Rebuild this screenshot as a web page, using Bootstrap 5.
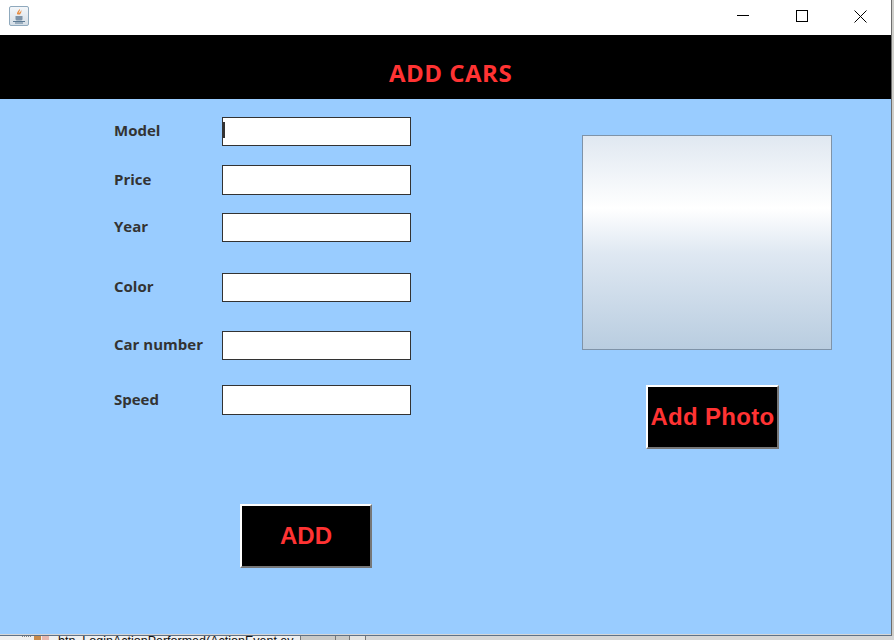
<!DOCTYPE html>
<html lang="en">
<head>
<meta charset="utf-8">
<title>Add Cars</title>
<link href="https://cdn.jsdelivr.net/npm/bootstrap@5.3.0/dist/css/bootstrap.min.css" rel="stylesheet">
<style>
html,body{height:640px;overflow:hidden;background:#d6d6d6}
.deskrow{height:636px}
.appwin{width:892px;height:636px;flex:none;border-right:1px solid #6e6e6e;border-bottom:1px solid #5f7186}
.sidestrip{width:2px;background:#cfcfcb}
.ttlbar{height:35px;background:#fff}
.javaico{width:20px;height:20px;margin:6px 0 0 9px;border:1px solid #8fa9bd;border-radius:2px;background:linear-gradient(#f4f7fa,#d5dee6)}
.ctlgroup{margin-right:1px}
.wctl{width:59px;height:35px;padding-top:10px}
.hdrbar{height:64px;background:#000;padding:22px 0 0 10px}
.hdrtitle{font:700 24px/32px "Open Sans","Liberation Sans",sans-serif;color:#ff3333;margin:0;letter-spacing:.5px}
.formpane{height:535px;background:#99ccff}
.leftcol{width:554px;padding:18px 0 0 114px}
.frow1{margin-bottom:19px}
.frow2{margin-bottom:18px}
.frow3{margin-bottom:31px}
.frow4{margin-bottom:29px}
.frow5{margin-bottom:25px}
.flabel{width:108px;margin:0;font:700 15px/26px "Open Sans","Liberation Sans",sans-serif;color:#333}
.lbldown{line-height:28px}
.finput.form-control{width:189px;height:29px;min-height:0;padding:0 1px;border:1px solid #333;border-radius:0;background:#fff;box-shadow:none}
.finput.tallinput{height:30px}
.caretbar{left:1px;top:5px;width:2px;height:16px;background:#333}
.actrow{padding:89px 0 0 126px}
.rightcol{padding:36px 0 0 28px}
.photobox{width:250px;height:215px;border:1px solid #7f93a8;background:linear-gradient(#e0e8f1 0,#ffffff 34%,#dfe8f2 55%,#b9cde0 100%)}
.photoact{padding:35px 0 0 64px}
.blackbtn.btn{height:64px;padding:0;border-radius:0;background:#000;color:#ff3333;font:700 24px/1 "Liberation Sans",Arial,sans-serif;border:2px solid;border-color:#fff #777 #777 #fff}
.addbtn.btn{width:132px}
.photobtn.btn{width:133px;white-space:nowrap;letter-spacing:.3px}
.idestrip{height:4px;overflow:hidden;background:#f0f0f0}
.idecode{width:301px;padding-left:22px;border-right:1px solid #777;font:12.500px/11px "Liberation Sans",Arial,sans-serif;color:#111;white-space:nowrap}
.ideicons{vertical-align:top}
.idetab{height:4px;background:#c9c9c7;border-right:1px solid #777}
.idetab1{width:35px}
.idetab2{width:14px}
.idetab3{width:16px;background:#e4e4e2}
.idefill{background:#d6d6d6}
</style>
</head>
<body class="m-0">
<div class="deskrow d-flex">
<div class="appwin">
  <div class="ttlbar d-flex justify-content-between">
    <div class="javaico d-flex align-items-center justify-content-center">
      <svg width="14" height="16" viewBox="0 0 14 16"><path d="M7.500 1c1.500 2-1.500 2.500-.5 4.500 0-1.500 2.500-1.500 2-4 1 2 0 3.500-1 5H5.500C4 5 6.500 3 7.500 1z" fill="#e98a3c"/><path d="M3.500 8h7v3c0 1-1 1.500-2 1.500h-3c-1 0-2-.5-2-1.500z" fill="#7d93a8"/><path d="M1 13.500h12M3 15h8" stroke="#5c7a94" stroke-width="1" fill="none"/></svg>
    </div>
    <div class="ctlgroup d-flex">
      <div class="wctl d-flex justify-content-center"><svg width="12" height="12" viewBox="0 0 12 12"><path d="M0 5.500h12" stroke="#000" fill="none"/></svg></div>
      <div class="wctl d-flex justify-content-center"><svg width="12" height="12" viewBox="0 0 12 12"><rect x=".5" y=".5" width="11" height="11" stroke="#000" fill="none"/></svg></div>
      <div class="wctl d-flex justify-content-center"><svg width="13" height="13" viewBox="0 0 13 13"><path d="M.5.500l12 12M12.500.500l-12 12" stroke="#000" fill="none"/></svg></div>
    </div>
  </div>
  <div class="hdrbar text-center"><h1 class="hdrtitle">ADD CARS</h1></div>
  <div class="formpane d-flex">
    <div class="leftcol">
      <div class="frow1 d-flex"><label class="flabel">Model</label><div class="position-relative"><input class="finput form-control" type="text"><span class="caretbar position-absolute"></span></div></div>
      <div class="frow2 d-flex"><label class="flabel lbldown">Price</label><input class="finput tallinput form-control" type="text"></div>
      <div class="frow3 d-flex"><label class="flabel">Year</label><input class="finput form-control" type="text"></div>
      <div class="frow4 d-flex"><label class="flabel">Color</label><input class="finput form-control" type="text"></div>
      <div class="frow5 d-flex"><label class="flabel">Car number</label><input class="finput form-control" type="text"></div>
      <div class="d-flex"><label class="flabel lbldown">Speed</label><input class="finput tallinput form-control" type="text"></div>
      <div class="actrow"><button class="blackbtn addbtn btn" type="button">ADD</button></div>
    </div>
    <div class="rightcol">
      <div class="photobox"></div>
      <div class="photoact"><button class="blackbtn photobtn btn" type="button">Add Photo</button></div>
    </div>
  </div>
</div>
<div class="sidestrip"></div>
</div>
<div class="idestrip d-flex">
  <div class="idecode flex-shrink-0"><svg class="ideicons" width="36" height="4" viewBox="0 0 36 4"><path d="M0 .5h10" stroke="#888" stroke-dasharray="1 1" fill="none"/><rect x="12" width="7" height="4" fill="#c98a4a"/><rect x="20" width="7" height="4" fill="#e8b8b0"/></svg>btn_LoginActionPerformed(ActionEvent ev</div>
  <div class="idetab idetab1"></div>
  <div class="idetab idetab2"></div>
  <div class="idetab idetab3"></div>
  <div class="idefill flex-grow-1"></div>
</div>
</body>
</html>
